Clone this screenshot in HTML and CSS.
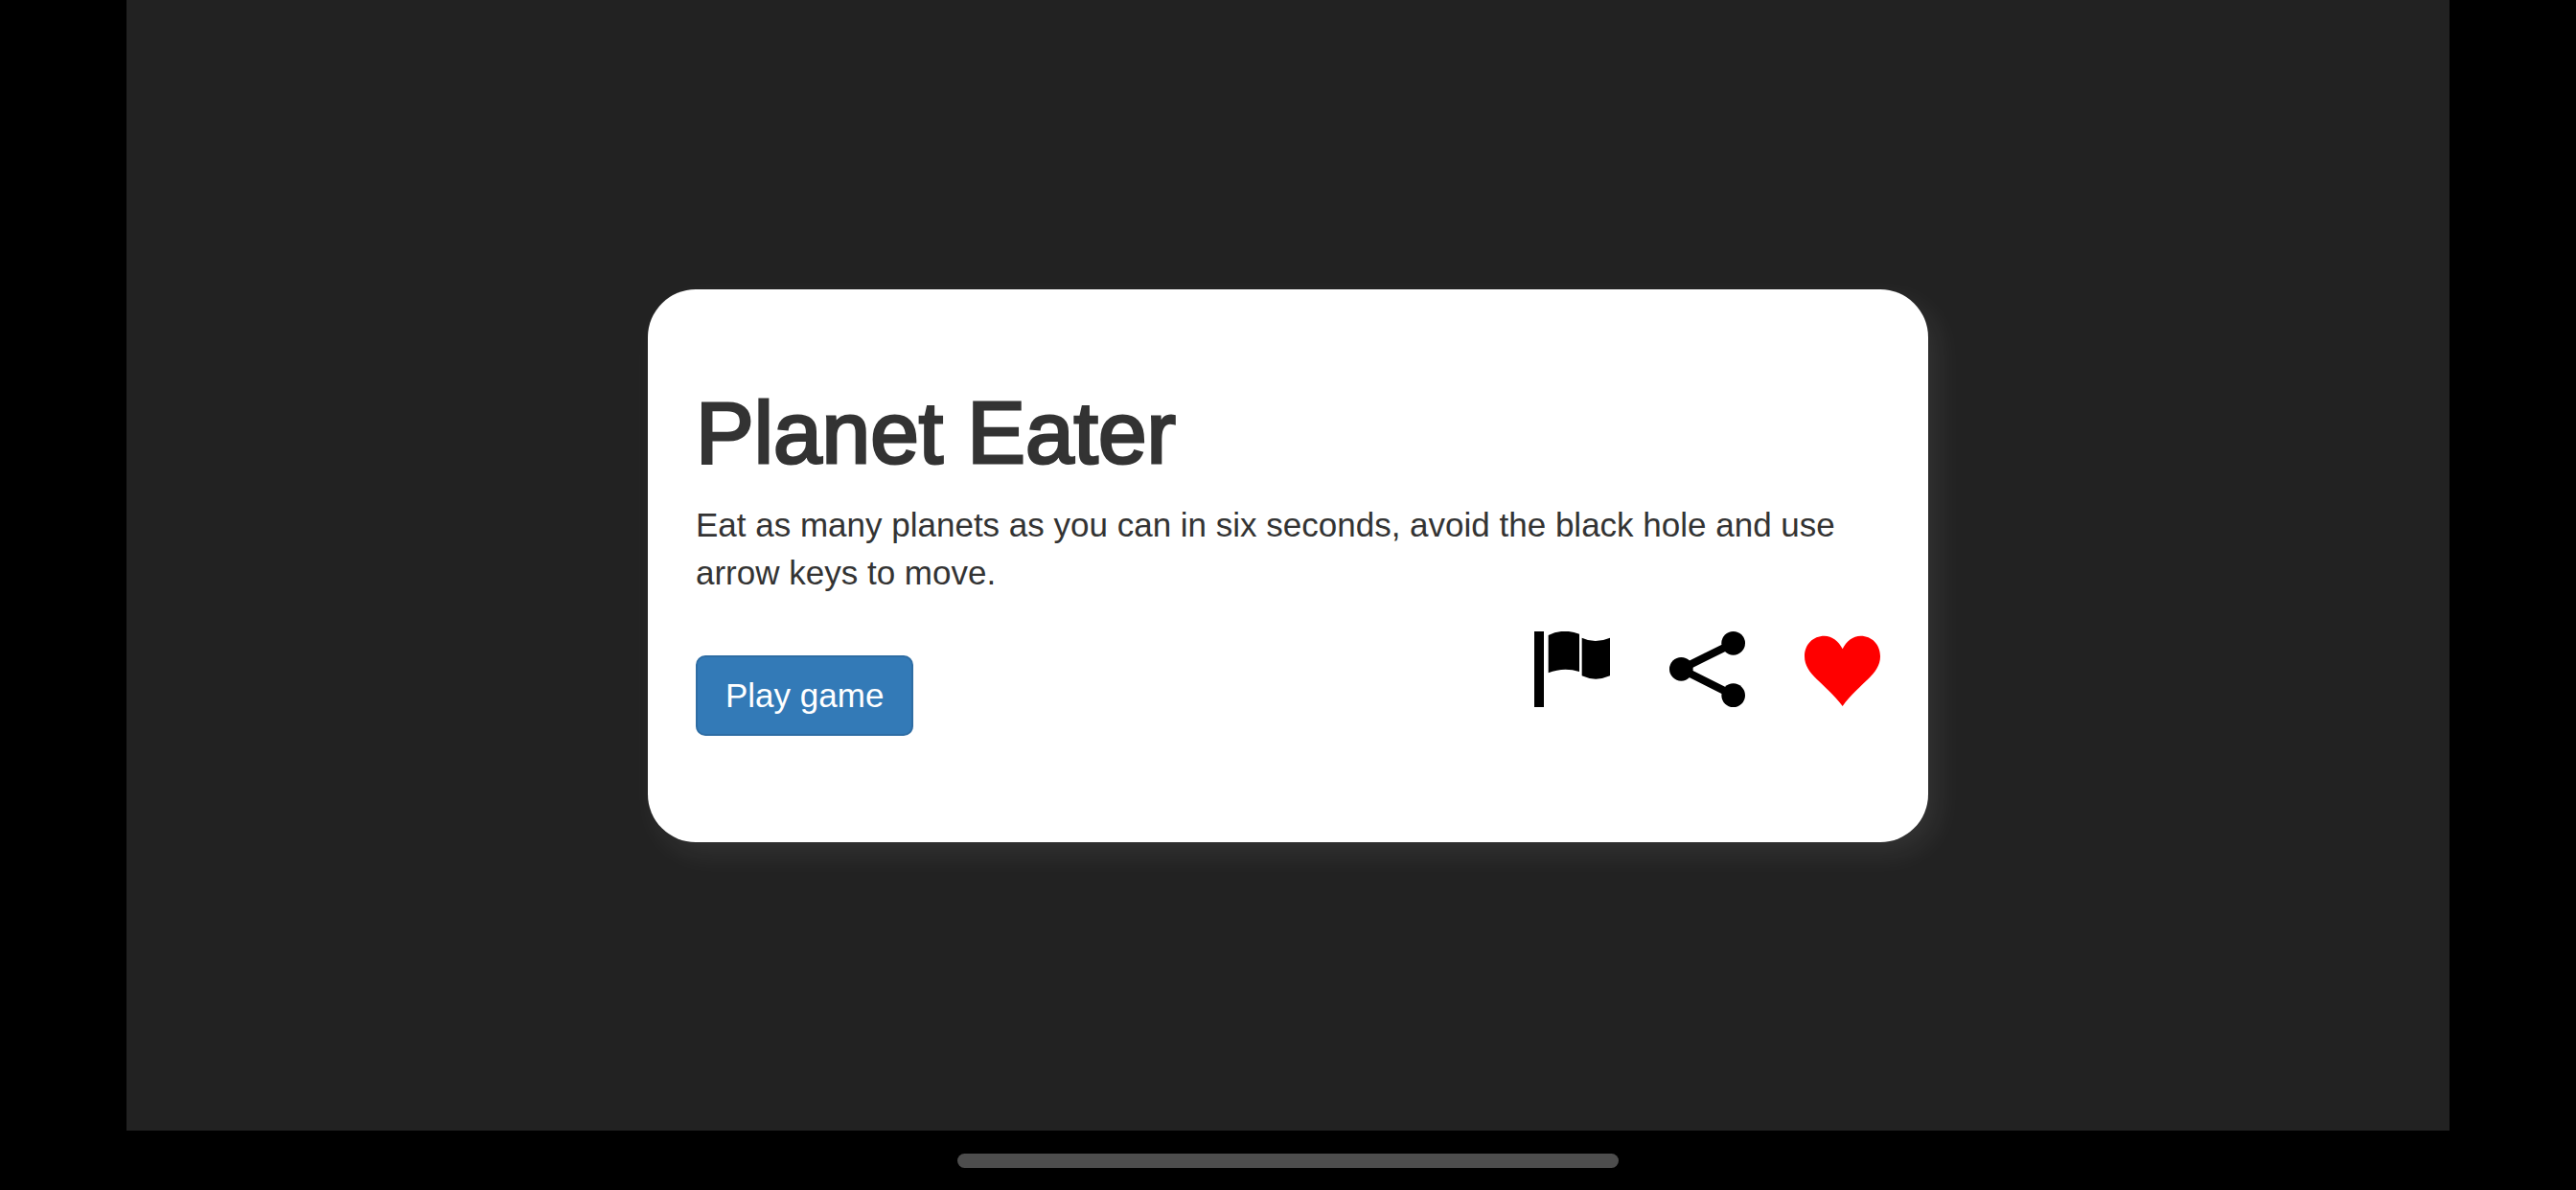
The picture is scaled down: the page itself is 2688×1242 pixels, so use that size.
FILE: index.html
```html
<!DOCTYPE html>
<html lang="en">
<head>
<meta charset="utf-8">
<meta name="viewport" content="width=device-width, initial-scale=1">
<title>Planet Eater</title>
<link rel="stylesheet" href="styles.css">
</head>
<body>
<main class="screen">
  <article class="card">
    <h1 class="card-title">Planet Eater</h1>
    <p class="card-text">Eat as many planets as you can in six seconds, avoid the black hole and use arrow keys to move.</p>
    <div class="card-actions">
      <button class="play" type="button">Play game</button>
      <div class="icons">
        <button class="icon-button" type="button" aria-label="Report">
          <svg class="icon" viewBox="0 0 237 237" aria-hidden="true">
            <path d="M0 0H30V237H0ZM44 12Q90 -11 141 8V126Q92 110 44 130ZM149 20Q190 40 237 20V139Q192 159 149 139Z"/>
          </svg>
        </button>
        <button class="icon-button" type="button" aria-label="Share">
          <svg class="icon" viewBox="0 0 237 237" aria-hidden="true">
            <path d="M200 37L37 118L200 200" fill="none" stroke="currentColor" stroke-width="24"/>
            <circle cx="37" cy="118" r="37"/>
            <circle cx="200" cy="37" r="37"/>
            <circle cx="200" cy="200" r="37"/>
          </svg>
        </button>
        <button class="icon-button icon-like" type="button" aria-label="Like">
          <svg class="icon" viewBox="0 0 237 237" aria-hidden="true">
            <path d="M119 55C107 30 86 14 62 14C27 14 0 40 0 78C0 136 64 160 119 234C173 160 237 136 237 78C237 40 210 14 176 14C151 14 131 30 119 55Z"/>
          </svg>
        </button>
      </div>
    </div>
  </article>
</main>
<footer class="home-bar"><span class="home-indicator"></span></footer>
</body>
</html>
```
FILE: styles.css
```css
* {
  box-sizing: border-box;
}

body {
  margin: 0;
  min-height: 100vh;
  display: flex;
  flex-direction: column;
  background: #000;
  color: #333;
  font-family: "Liberation Sans", Arial, sans-serif;
  font-size: 35px;
  line-height: 50px;
}

.screen {
  flex: 1;
  display: flex;
  align-items: center;
  justify-content: center;
  margin: 0 132px;
  background: #222;
}

.card {
  width: 100%;
  max-width: 1336px;
  padding: 101px 50px 111px;
  border-radius: 50px;
  background: #fff;
  box-shadow: 10px 12px 30px rgba(255, 255, 255, 0.08);
}

.card-title {
  margin: 0 0 22px;
  font-size: 91px;
  font-weight: 500;
  line-height: 98px;
  -webkit-text-stroke: 3px currentColor;
}

.card-text {
  margin: 0 0 36px;
}

.card-actions {
  display: flex;
  flex-wrap: wrap;
  align-items: flex-start;
  justify-content: space-between;
}

.play {
  margin-top: 25px;
  padding: 15px 29px;
  border: 2px solid #2e6da4;
  border-radius: 10px;
  background: #337ab7;
  color: #fff;
  font: inherit;
  cursor: pointer;
}

.icons {
  display: flex;
  gap: 62px;
}

.icon-button {
  padding: 0;
  border: 0;
  background: none;
  color: #000;
  cursor: pointer;
}

.icon-like {
  color: #f00;
}

.icon {
  display: block;
  width: 79px;
  height: 79px;
  fill: currentColor;
}

.home-bar {
  display: flex;
  align-items: center;
  justify-content: center;
  height: 62px;
}

.home-indicator {
  width: 690px;
  height: 15px;
  border-radius: 8px;
  background: #4d4d4d;
}
```
